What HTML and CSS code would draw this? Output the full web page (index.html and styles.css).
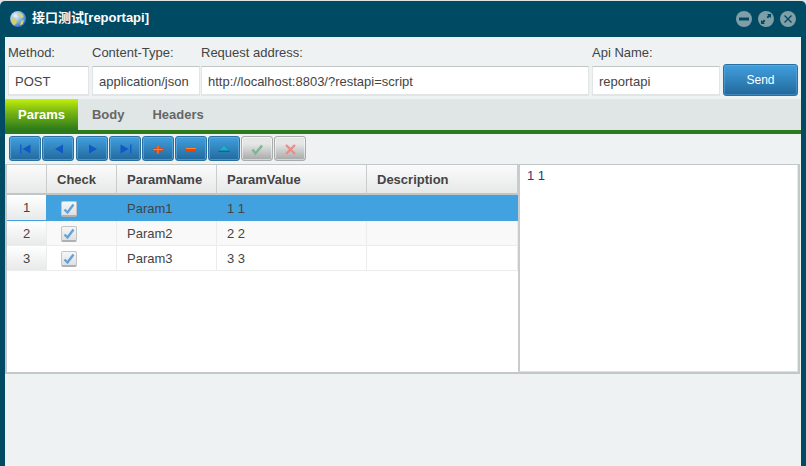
FILE: index.html
```html
<!DOCTYPE html>
<html lang="en">
<head>
<meta charset="utf-8">
<title>接口测试</title>
<link rel="stylesheet" href="styles.css">
</head>
<body>
<div class="window">
  <header class="titlebar">
    <svg class="globe" width="16" height="16" viewBox="0 0 16 16">
      <defs>
        <radialGradient id="g" cx="0.35" cy="0.3" r="0.75">
          <stop offset="0" stop-color="#eef6fa"/><stop offset="0.55" stop-color="#7fb2e4"/><stop offset="1" stop-color="#2f6cc0"/>
        </radialGradient>
      </defs>
      <circle cx="8" cy="8" r="8" fill="url(#g)"/>
      <path d="M7.500 1.500c2.800.2 5 1.600 6 3.800l-1.500 2-2-1-1.500-1.500-1.500-.5z" fill="#d8d27a"/>
      <path d="M1.200 6l3.300.5 2.500 2.500-.5 3-2 2.600C2.400 13.500 1 11 1 8.500z" fill="#cfcf78"/>
      <path d="M11 10l3-1.200-1.200 4.200-2.800 1.500z" fill="#e6cf62"/>
    </svg>
    <h1 class="title">接口测试[reportapi]</h1>
    <div class="winbtns">
      <svg class="winbtn" width="16" height="16" viewBox="0 0 16 16"><circle cx="8" cy="8" r="8" fill="#7f9ea8"/><rect x="3" y="6.500" width="10" height="3" fill="#004a63"/></svg>
      <svg class="winbtn" width="16" height="16" viewBox="0 0 16 16"><circle cx="8" cy="8" r="8" fill="#7f9ea8"/><path d="M9 3h4v4l-1.300-1.300-1.700 1.700-1.400-1.400 1.700-1.700zM7 13H3V9l1.300 1.300 1.700-1.700 1.400 1.400-1.700 1.700z" fill="#004a63"/></svg>
      <svg class="winbtn" width="16" height="16" viewBox="0 0 16 16"><circle cx="8" cy="8" r="8" fill="#7f9ea8"/><path d="M4.500 4.500l7 7M11.500 4.500l-7 7" stroke="#004a63" stroke-width="1.400" fill="none"/></svg>
    </div>
  </header>
  <main class="content">
    <div class="form">
      <div class="field"><span class="label">Method:</span><div class="input">POST</div></div>
      <div class="field tight"><span class="label">Content-Type:</span><div class="input">application/json</div></div>
      <div class="field"><span class="label">Request address:</span><div class="input">http://localhost:8803/?restapi=script</div></div>
      <div class="field"><span class="label">Api Name:</span><div class="input">reportapi</div></div>
      <button class="send">Send</button>
    </div>
    <nav class="tabs">
      <span class="tab active">Params</span>
      <span class="tab">Body</span>
      <span class="tab">Headers</span>
    </nav>
    <div class="toolbar">
      <span class="tbtn"><svg width="30" height="23" viewBox="0 0 30 23"><path d="M10 7.500h1.500v9H10z" fill="#0f5fd0"/><path d="M12.500 12l8-4.500v9z" fill="#1058c4"/></svg></span>
      <span class="tbtn"><svg width="30" height="23" viewBox="0 0 30 23"><path d="M12 12l8-4.500v9z" fill="#1058c4"/></svg></span>
      <span class="tbtn"><svg width="30" height="23" viewBox="0 0 30 23"><path d="M20 12l-8-4.500v9z" fill="#1058c4"/></svg></span>
      <span class="tbtn"><svg width="30" height="23" viewBox="0 0 30 23"><path d="M20 7.500h1.500v9H20z" fill="#0f5fd0"/><path d="M18.500 12l-8-4.500v9z" fill="#1058c4"/></svg></span>
      <span class="tbtn"><svg width="30" height="23" viewBox="0 0 30 23"><path d="M13.800 8h2.400v3.300h3.800v2.400h-3.800V17h-2.400v-3.300H10v-2.400h3.800z" fill="#f0400a"/><path d="M14.500 8.500h1v8h-1zM10.500 12h9v1h-9z" fill="#ff8a20"/></svg></span>
      <span class="tbtn"><svg width="30" height="23" viewBox="0 0 30 23"><rect x="10" y="11" width="10" height="3" fill="#f0400a"/><rect x="10" y="11" width="10" height="1" fill="#ff8a20"/></svg></span>
      <span class="tbtn"><svg width="30" height="23" viewBox="0 0 30 23"><path d="M15 9l5.500 5.500h-11z" fill="#14b4c8"/><rect x="9.500" y="13.500" width="11" height="1.500" fill="#0b6a8c"/></svg></span>
      <span class="tbtn off"><svg width="30" height="23" viewBox="0 0 30 23"><path d="M10.500 12.500l3 4 6.500-8" fill="none" stroke="#7db893" stroke-width="2.400"/></svg></span>
      <span class="tbtn off"><svg width="30" height="23" viewBox="0 0 30 23"><path d="M11 8l9 9M20 8l-9 9" fill="none" stroke="#e88c88" stroke-width="2.200"/></svg></span>
    </div>
    <section class="panel">
      <table class="grid">
        <colgroup><col class="c-num"><col class="c-check"><col class="c-name"><col class="c-value"><col class="c-desc"></colgroup>
        <thead>
          <tr><th></th><th>Check</th><th>ParamName</th><th>ParamValue</th><th>Description</th></tr>
        </thead>
        <tbody>
          <tr class="selected"><td class="num">1</td><td><span class="cb"><svg width="14" height="14" viewBox="0 0 14 14"><path d="M2.500 7.500l3 3 6-8" fill="none" stroke="#5ea3dc" stroke-width="2.400"/></svg></span></td><td>Param1</td><td>1 1</td><td></td></tr>
          <tr class="alt"><td class="num">2</td><td><span class="cb"><svg width="14" height="14" viewBox="0 0 14 14"><path d="M2.500 7.500l3 3 6-8" fill="none" stroke="#5ea3dc" stroke-width="2.400"/></svg></span></td><td>Param2</td><td>2 2</td><td></td></tr>
          <tr><td class="num">3</td><td><span class="cb"><svg width="14" height="14" viewBox="0 0 14 14"><path d="M2.500 7.500l3 3 6-8" fill="none" stroke="#5ea3dc" stroke-width="2.400"/></svg></span></td><td>Param3</td><td>3 3</td><td></td></tr>
        </tbody>
      </table>
      <div class="editor">1 1</div>
    </section>
  </main>
</div>
</body>
</html>
```
FILE: styles.css
```css
* { box-sizing: border-box; }
html, body { margin: 0; height: 100%; overflow: hidden; }
body { background: #dfe3e4; font: 13px "Liberation Sans", "Noto Sans CJK SC", sans-serif; color: #444; padding-top: 1px; }
.window { height: 465px; display: flex; flex-direction: column; background: #004a63; border-radius: 5px 5px 0 0; padding: 0 5px; }
.titlebar { height: 36px; flex: none; display: flex; align-items: center; padding: 0 0 0 5px; }
.globe { flex: none; margin-top: -1px; }
.title { margin: -2px 0 0 6px; font-size: 13px; font-weight: 700; color: #fff; flex: 1; line-height: 16px; }
.winbtns { display: flex; gap: 6px; margin-right: 5px; margin-top: -1px; }
.winbtn { display: block; }
.content { flex: 1; background: #eef2f3; display: flex; flex-direction: column; min-height: 0; }
.form { display: grid; grid-template-columns: 84px 109px 391px 131px 75px; padding: 0 0 0 3px; align-items: end; }
.field { padding-right: 3px; display: flex; flex-direction: column; }
.field.tight { padding-right: 1px; }
.label { height: 29px; line-height: 32px; color: #444; white-space: nowrap; }
.input { height: 30px; background: #fff; border: 1px solid #e2e5e5; border-top-color: #c4c6c6; border-bottom-width: 2px; line-height: 29px; padding-left: 6px; color: #444; white-space: nowrap; overflow: hidden; }
.send { height: 32px; padding: 0; background: linear-gradient(#41a0de, #22689c); border: 1px solid #2a6f9f; border-radius: 3px; color: #fff; font: 12px "Liberation Sans", sans-serif; box-shadow: inset 0 0 0 1px rgba(120,190,235,.35); }
.tabs { margin-top: 3px; height: 35px; flex: none; display: flex; background: #e0e6e6; border-bottom: 4px solid #2c7a1b; }
.tab { padding: 0 14px; line-height: 31px; font-weight: 700; color: #666; }
.tab.active { padding: 0 13px; color: #fff; background: linear-gradient(#c0f00c 0%, #78b612 42%, #2c7a1b 100%); }
.toolbar { display: flex; gap: 1px; padding: 2px 0 0 4px; flex: none; }
.tbtn { width: 32px; height: 25px; border: 1px solid #2a6f9f; border-radius: 3px; background: linear-gradient(#41a0de, #22699d); box-shadow: inset 0 0 0 1px rgba(110,185,235,.55); display: block; }
.tbtn:nth-child(3) { margin-left: 1px; }
.tbtn svg { display: block; }
.tbtn.off { border-color: #a8acac; background: linear-gradient(#e6e6e6 30%, #a6a8a8); box-shadow: inset 0 0 0 1px rgba(255,255,255,.5); }
.panel { margin-top: 3px; width: 795px; height: 210px; flex: none; display: flex; background: #fff; border: 2px solid #c0c8c8; border-top-width: 1px; }
.grid { width: 511px; flex: none; border-collapse: separate; border-spacing: 0; table-layout: fixed; align-self: flex-start; }
.c-num { width: 40px; } .c-check { width: 70px; } .c-name { width: 100px; } .c-value { width: 150px; } .c-desc { width: 151px; }
.grid th { height: 30px; padding: 0 0 0 10px; text-align: left; font-weight: 700; color: #444; background: linear-gradient(#fbfbfb, #e7e8e8); border-right: 1px solid #c8cccc; border-bottom: 2px solid #c0c6c6; }
.grid td { height: 25px; padding: 0 0 0 10px; border-right: 1px solid #ececec; border-bottom: 1px solid #ececec; color: #444; }
.grid td.num { padding: 0; text-align: center; background: linear-gradient(#fff, #e8e9e9); }
.alt td { background: #f9f9f9; }
.selected td { height: 26px; padding-top: 1px; background: #42a1df; border-color: #42a1df; }
.cb { display: block; width: 16px; height: 16px; margin: 2px 0 0 4px; padding: 1px; background: linear-gradient(#f6f6f6, #e0e0e0); border: 1px solid #c4c4c4; border-bottom: 2px solid #b0b0b0; border-radius: 2px; }
.cb svg { display: block; margin-top: -1px; margin-left: -1px; }
.editor { flex: 1; border-left: 2px solid #c8cccc; border-right: 1px solid #e8eaea; border-bottom: 1px solid #e0e2e2; padding: 3px 0 0 7px; color: #2a3a7a; }
```
